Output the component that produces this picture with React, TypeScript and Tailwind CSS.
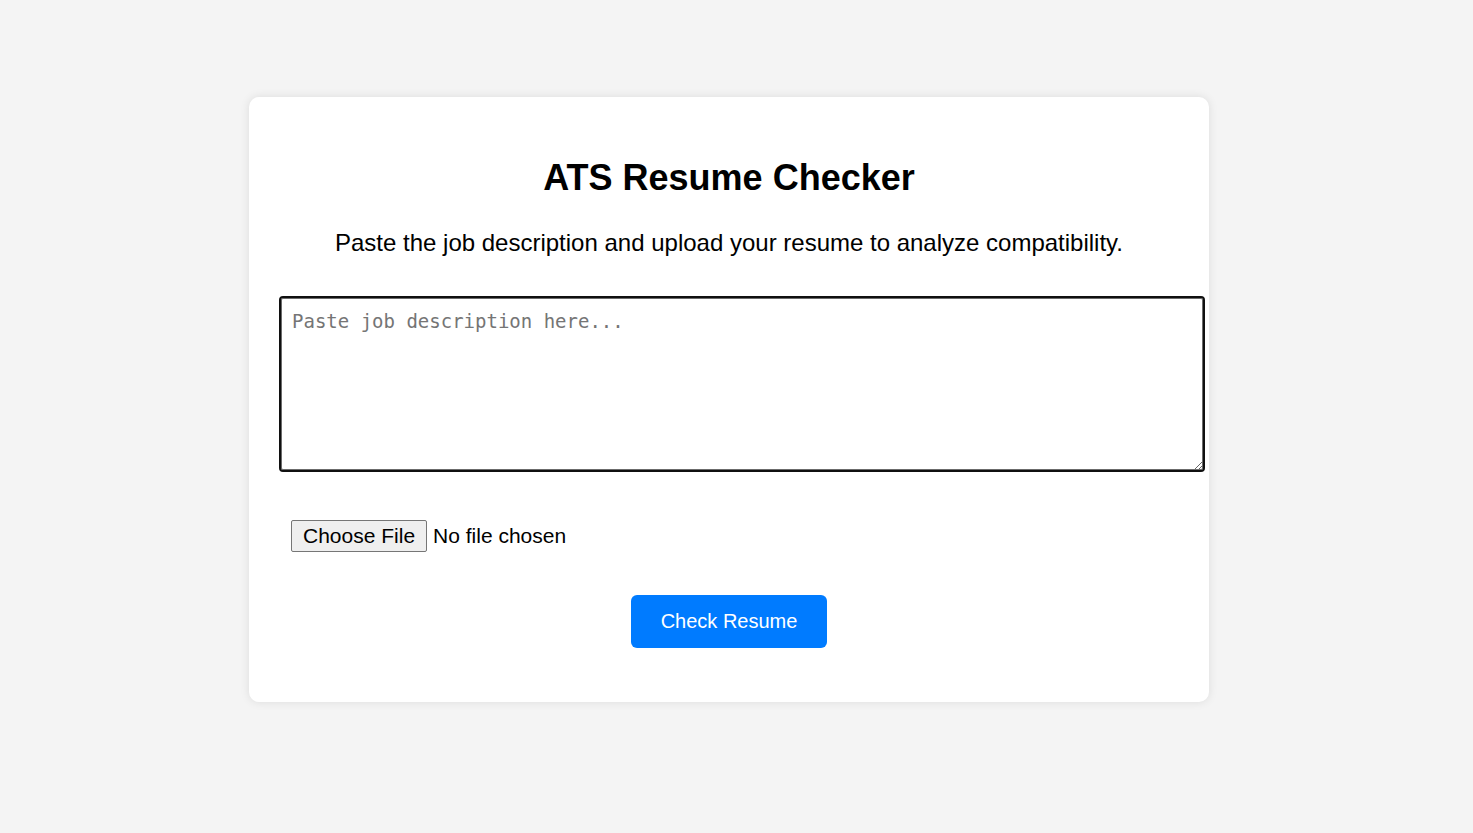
export default function App() {
  return (
    <div
      className="min-h-screen bg-[#f4f4f4] pt-[97px] pr-[15px] text-black"
      style={{ fontFamily: '"Liberation Sans", Arial, sans-serif' }}
    >
      <div className="mx-auto w-[960px] h-[605px] bg-white rounded-[10px] shadow-[0_0_10px_rgba(0,0,0,0.1)] px-[30px] pt-[60px] text-center">
        <h1 className="text-[36px] leading-[41px] font-bold">ATS Resume Checker</h1>
        <p className="mt-[31px] text-[24px] leading-[28px]">
          Paste the job description and upload your resume to analyze compatibility.
        </p>

        <textarea
          className="block mt-[39px] w-[926px] h-[176px] border-2 border-[#101010] rounded-[4px] shadow-[inset_0_0_0_1px_#6b6b6b] px-[11px] pt-[11px] pb-[10px] text-[19px] leading-[24px] placeholder:text-[#757575] outline-none"
          style={{ fontFamily: '"DejaVu Sans Mono", "Liberation Mono", monospace' }}
          placeholder="Paste job description here..."
        />

        <div className="mt-[48px] pl-[12px] text-left">
          <label className="inline-flex items-center gap-[6px] text-[21px] leading-[24px] cursor-pointer">
            <span className="inline-flex items-center h-[32px] px-[11px] bg-[#efefef] border border-[#767676] rounded-[2px]">
              Choose File
            </span>
            <span>No file chosen</span>
            <input type="file" className="hidden" />
          </label>
        </div>

        <button className="mt-[43px] w-[196px] h-[53px] pb-[1px] rounded-[6px] bg-[#007bff] text-white text-[20px]">
          Check Resume
        </button>
      </div>
    </div>
  );
}
